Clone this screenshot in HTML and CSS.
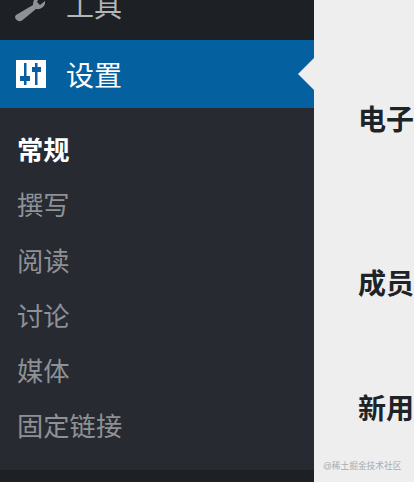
FILE: index.html
```html
<!DOCTYPE html>
<html lang="zh-CN">
<head>
<meta charset="UTF-8" />
<title>设置</title>
<link rel="stylesheet" href="styles.css">
</head>
<body>
  <div class="page">
    <div class="sidebar">
      <div class="menu-top">
        <svg class="tool-icon" width="32" height="22" viewBox="0 0 32 22">
          <path fill="#8e9196" d="M2 15 L19 5 C19 2 20 0 21 -2 L25 -2 L23 2 L26 5 L31 1 C32 5 28 10 22 9 L8 20.500 C4 23 -1 18 2 15 Z"/>
        </svg>
        <span class="menu-label">工具</span>
      </div>
      <div class="menu-current">
        <span class="settings-icon">
          <svg width="30" height="28" viewBox="0 0 30 28">
            <rect width="30" height="28" fill="#fff"/>
            <path fill="#0a5d9e" d="M8 3h2.500v13H8z M4 16h10v5H4z M8 21h2.500v4H8z M19 3h2.500v4H19z M16 7h9v5h-9z M19 12h2.500v13H19z"/>
          </svg>
        </span>
        <span class="menu-label">设置</span>
        <span class="current-arrow"></span>
      </div>
      <ul class="submenu">
        <li class="active">常规</li>
        <li>撰写</li>
        <li>阅读</li>
        <li>讨论</li>
        <li>媒体</li>
        <li>固定链接</li>
      </ul>
    </div>
    <div class="content">
      <div class="field-label first">电子</div>
      <div class="field-label second">成员</div>
      <div class="field-label third">新用</div>
      <div class="watermark">@稀土掘金技术社区</div>
    </div>
  </div>
</body>
</html>
```

FILE: styles.css
```css
html, body {
  margin: 0;
  height: 100%;
  overflow: hidden;
}

body {
  background: #eeeeef;
  font-family: "Liberation Sans", "Noto Sans CJK SC", sans-serif;
}

.page {
  display: flex;
  height: 482px;
}

.sidebar {
  width: 314px;
  flex: none;
  display: flex;
  flex-direction: column;
  background: #1d2024;
}

.menu-top {
  height: 40px;
  box-sizing: border-box;
  display: flex;
  align-items: flex-end;
  padding: 0 0 18px 14px;
  overflow: hidden;
  color: #b4b7ba;
}

.tool-icon {
  flex: none;
}

.menu-top .menu-label {
  margin-left: 20px;
  line-height: 28px;
}

.menu-label {
  font-size: 28px;
}

.menu-current {
  position: relative;
  height: 68px;
  flex: none;
  display: flex;
  align-items: center;
  padding-left: 16px;
  background: #04609f;
  color: #fff;
}

.settings-icon {
  display: flex;
  width: 30px;
  margin-right: 20px;
}

.current-arrow {
  position: absolute;
  right: 0;
  top: 18px;
  border: 16px solid transparent;
  border-left: 0;
  border-right: 16px solid #eeeeef;
}

.submenu {
  list-style: none;
  margin: 0;
  padding: 16px 0 14px 17px;
  height: 332px;
  box-sizing: content-box;
  background: #272a31;
  color: #8e9196;
  font-size: 26.3px;
  line-height: 55.3px;
}

.submenu .active {
  color: #fff;
  font-weight: bold;
}

.content {
  flex: 1;
  display: flex;
  flex-direction: column;
  padding-left: 44px;
  min-width: 0;
  overflow: hidden;
}

.field-label {
  font-size: 28px;
  line-height: 30px;
  font-weight: bold;
  color: #1d2327;
  white-space: nowrap;
}

.first { margin-top: 106px; }
.second { margin-top: 134px; }
.third { margin-top: 95px; }

.watermark {
  margin: 35px 0 0 -35px;
  font-size: 8.7px;
  line-height: 12px;
  color: #a9abae;
  white-space: nowrap;
}
```
